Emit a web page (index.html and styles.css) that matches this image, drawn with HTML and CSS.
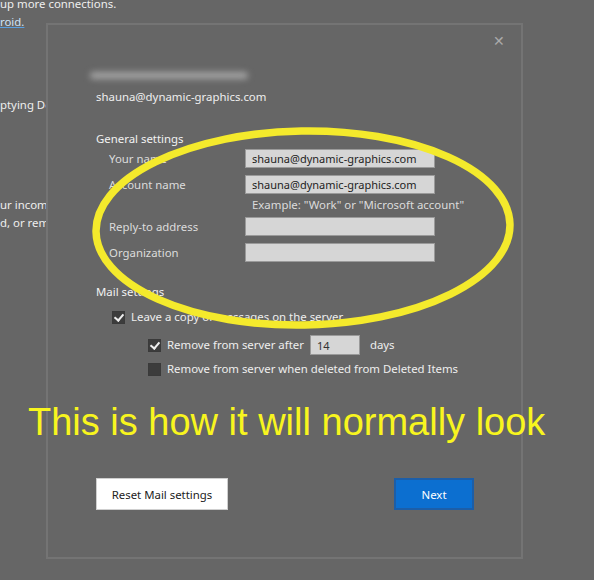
FILE: index.html
```html
<!DOCTYPE html>
<html lang="en">
<head>
    <meta charset="UTF-8">
    <meta name="viewport" content="width=device-width, initial-scale=1.0">
    <title>Account settings</title>
    <link rel="stylesheet" href="styles.css">
</head>
<body>
    <div class="backdrop">
        <p class="line line-top">up more connections.</p>
        <p class="line"><a href="#">roid.</a></p>
        <p class="line line-gap1">ptying Deleted Items</p>
        <p class="line line-gap2">ur incoming mail server</p>
        <p class="line">d, or removed from the server.</p>
    </div>

    <div class="dialog">
        <span class="close">&#x2715;</span>
        <div class="account-name"></div>
        <div class="account-email">shauna@dynamic-graphics.com</div>

        <h2 class="section">General settings</h2>
        <div class="fields">
            <label>Your name</label>
            <input type="text" value="shauna@dynamic-graphics.com">
            <label>Account name</label>
            <input type="text" value="shauna@dynamic-graphics.com">
            <span></span>
            <span class="hint">Example: "Work" or "Microsoft account"</span>
            <label>Reply-to address</label>
            <input type="text" value="">
            <label>Organization</label>
            <input type="text" value="">
        </div>

        <h2 class="section section-mail">Mail settings</h2>
        <div class="check check-top">
            <span class="box checked"></span>
            <span>Leave a copy of messages on the server</span>
        </div>
        <div class="check check-sub">
            <span class="box checked"></span>
            <span>Remove from server after</span>
            <input class="days" type="text" value="14">
            <span class="days-label">days</span>
        </div>
        <div class="check check-sub check-last">
            <span class="box"></span>
            <span>Remove from server when deleted from Deleted Items</span>
        </div>

        <div class="buttons">
            <button class="btn-reset">Reset Mail settings</button>
            <button class="btn-next">Next</button>
        </div>
    </div>

    <p class="caption">This is how it will normally look</p>

    <svg class="ring" width="594" height="580" viewBox="0 0 594 580">
        <ellipse cx="303" cy="228" rx="207" ry="97" fill="none" stroke="#f4ea2c" stroke-width="7.5" transform="rotate(-1 303 228)"/>
    </svg>
</body>
</html>
```

FILE: styles.css
```css
body {
    margin: 0;
    background-color: #666;
    font-family: "Noto Sans", "Open Sans", sans-serif;
    font-size: 11.4px;
    color: #eee;
    width: 594px;
    height: 580px;
    overflow: hidden;
    position: relative;
}
.line {
    margin: 0;
    line-height: 18px;
    white-space: nowrap;
}
.line-top {
    margin-top: -5px;
}
.line a {
    color: #cfe3f7;
    text-decoration: underline;
    text-decoration-color: #5aa0e0;
}
.line-gap1 {
    margin-top: 65px;
}
.line-gap2 {
    margin-top: 82px;
}
/* modal sits over the settings page behind it */
.dialog {
    position: absolute;
    left: 46px;
    top: 23px;
    width: 477px;
    height: 536px;
    box-sizing: border-box;
    padding: 0 0 0 48px;
    background-color: #666;
    border: 2px solid #747474;
}
.close {
    position: absolute;
    right: 16px;
    top: 6px;
    font-size: 14px;
    color: #aaa;
}
.account-name {
    margin: 47px 0 0 -6px;
    width: 158px;
    height: 7px;
    border-radius: 4px;
    background-color: #a4a4a4;
    filter: blur(3px);
}
.account-email {
    margin-top: 10px;
    line-height: 16px;
    color: #eee;
}
.section {
    margin: 26px 0 0;
    font-size: 11.4px;
    font-weight: normal;
    line-height: 16px;
    color: #f2f2f2;
}
.section-mail {
    margin-top: 22px;
}
.fields {
    display: grid;
    grid-template-columns: 136px 190px;
    row-gap: 7px;
    align-items: center;
    margin: 2px 0 0 13px;
}
.fields label {
    color: #dcdcdc;
    line-height: 18px;
}
.fields input {
    width: 190px;
    height: 19px;
    box-sizing: border-box;
    margin: 0;
    padding: 0 6px;
    border: 1px solid #9a9a9a;
    background-color: #d6d6d6;
    font-family: inherit;
    font-size: 11px;
    color: #1e1e1e;
}
.hint {
    margin: -4px 0 -3px 7px;
    color: #dcdcdc;
    line-height: 16px;
    white-space: nowrap;
}
.check {
    display: flex;
    align-items: center;
    gap: 6px;
    line-height: 16px;
    color: #eee;
}
.check-top {
    margin: 9px 0 0 16px;
}
.check-sub {
    margin: 10px 0 0 52px;
}
.check-last {
    margin-top: 6px;
}
.box {
    width: 11px;
    height: 11px;
    border: 1px solid #3a3a3a;
    background-color: #3c3c3c;
    position: relative;
}
.box.checked::after {
    content: "";
    position: absolute;
    left: 3px;
    top: 0;
    width: 4px;
    height: 7px;
    border: solid #eee;
    border-width: 0 2px 2px 0;
    transform: rotate(40deg);
}
.days {
    width: 50px;
    height: 20px;
    box-sizing: border-box;
    margin: 0;
    padding: 0 6px;
    border: 1px solid #9a9a9a;
    background-color: #d6d6d6;
    font-family: inherit;
    font-size: 11px;
    color: #333;
}
.days-label {
    margin-left: 4px;
}
.buttons {
    display: flex;
    justify-content: space-between;
    width: 378px;
    margin-top: 101px;
}
.buttons button {
    height: 32px;
    font-family: inherit;
    font-size: 11.4px;
    cursor: pointer;
}
.btn-reset {
    width: 132px;
    background-color: #fff;
    border: 1px solid #cfcfcf;
    color: #222;
}
.btn-next {
    width: 80px;
    background-color: #0c6fd0;
    border: 2px solid #1c5ea8;
    color: #fff;
}
.caption {
    position: absolute;
    left: 28px;
    top: 400px;
    margin: 0;
    font-family: "Liberation Sans", Arial, sans-serif;
    font-size: 38px;
    line-height: 44px;
    color: #f8f51e;
    white-space: nowrap;
}
.ring {
    position: absolute;
    left: 0;
    top: 0;
    pointer-events: none;
}
```
